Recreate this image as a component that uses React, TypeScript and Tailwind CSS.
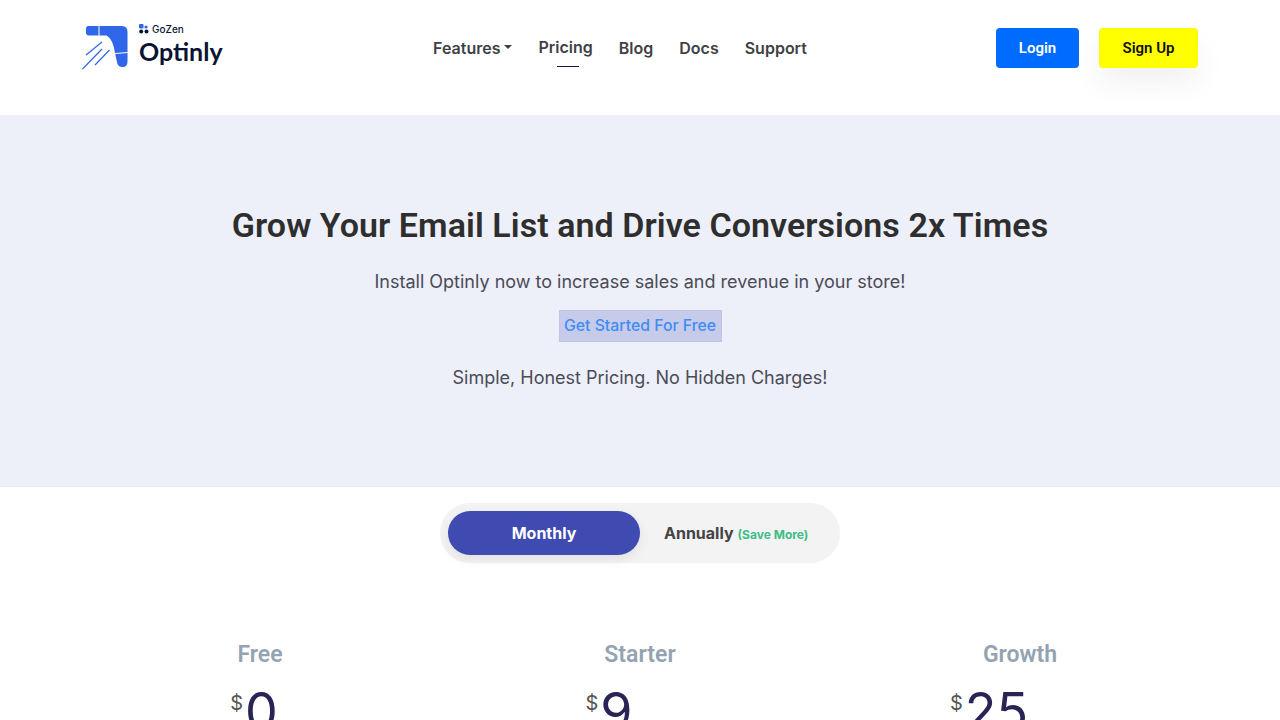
import React from "react";

const inter = "font-['Inter','Liberation_Sans',sans-serif]";
const roboto = "font-['Roboto','Liberation_Sans',sans-serif]";

function Mark() {
  return (
    <svg width="46" height="46" viewBox="0 0 46 46" className="shrink-0" aria-hidden="true">
      <path
        d="M6.5 2 H40 Q45.5 2 45.5 8 V37.5 Q45.5 43 40.5 43 Q35.5 43 35 38 L33 29 Q31 15 24.5 11.5 H7 Q4 11.5 4 8.5 V4.5 Q4 2 6.5 2 Z"
        fill="#2f66ea"
      />
      <path d="M17 1.5 V12" stroke="#fff" strokeWidth="1" />
      <path d="M33 29.5 L46 28.5" stroke="#fff" strokeWidth="1" />
      <path d="M4 31 L20 18" stroke="#2f66ea" strokeWidth="1.2" />
      <path d="M0.5 45 L20 25" stroke="#2f66ea" strokeWidth="1.2" />
      <path d="M13 41 L27.5 26" stroke="#2f66ea" strokeWidth="1.2" />
    </svg>
  );
}

function Logo() {
  return (
    <div className="flex items-start w-[140px] h-[46px]">
      <Mark />
      <div className="flex flex-col ml-[11px] -mt-[1px]">
        <div className="flex items-center gap-[3px] h-[11px]">
          <svg width="10" height="10" viewBox="0 0 10 10" aria-hidden="true">
            <rect x="0" y="0" width="4.5" height="4.5" rx="1" fill="#2f66ea" />
            <circle cx="2.2" cy="7.5" r="2" fill="#0b1533" />
            <circle cx="7.5" cy="7.5" r="2" fill="#0b1533" />
            <circle cx="7" cy="3" r="1.6" fill="#2f66ea" />
          </svg>
          <span className={`${inter} text-[10px] leading-none font-medium text-[#0b1533]`}>GoZen</span>
        </div>
        <span className="font-['Lato','Inter',sans-serif] text-[25px] leading-[34px] font-bold text-[#0b1533]">
          Optinly
        </span>
      </div>
    </div>
  );
}

function NavItem({ children }: { children: React.ReactNode }) {
  return <a className="text-[16px] leading-6 font-semibold text-[#3f3f46]">{children}</a>;
}

function Plan({ name, price, shift }: { name: string; price: string; shift: string }) {
  return (
    <div className="flex flex-col items-center">
      <h3 className={`${roboto} text-[23px] leading-[28px] font-semibold text-[#94a3b1]`}>{name}</h3>
      <div className={`flex items-start mt-[13px] ${shift}`}>
        <span className={`${inter} text-[20px] leading-6 text-[#555] mt-[9px] mr-[2px]`}>$</span>
        <span className={`${inter} text-[52px] leading-[60px] text-[#2a2356]`}>{price}</span>
      </div>
    </div>
  );
}

export default function App() {
  return (
    <div className={`${inter} h-[720px] overflow-hidden bg-white`}>
      <header className="h-[115px] flex items-start justify-between pl-[82px] pr-[82px] pt-[24px]">
        <Logo />
        <nav className="flex items-center gap-[26px] mt-[12px] ml-[22px]">
          <a className="flex items-center gap-[4px] text-[16px] leading-6 font-semibold text-[#3f3f46]">
            Features
            <span className="w-0 h-0 border-x-[4px] border-x-transparent border-t-[4px] border-t-[#3f3f46] mb-[2px]" />
          </a>
          <a className="relative -mt-[1px] -translate-y-[1px] text-[16px] leading-6 font-semibold text-[#3f3f46]">
            Pricing
            <span className="absolute left-[19px] top-[31px] w-[22px] h-[1px] bg-[#14143c]" />
          </a>
          <NavItem>Blog</NavItem>
          <NavItem>Docs</NavItem>
          <NavItem>Support</NavItem>
        </nav>
        <div className={`${roboto} flex items-center gap-[20px] mt-[4px]`}>
          <button className="w-[83px] h-[40px] rounded-[4px] bg-[#006cff] text-white text-[15px] font-semibold">
            Login
          </button>
          <button className="w-[99px] h-[40px] rounded-[4px] bg-[#ffff00] text-[#111] text-[15px] font-semibold shadow-[0_15px_30px_rgba(0,0,0,0.06)]">
            Sign Up
          </button>
        </div>
      </header>

      <section className="h-[372px] bg-[#edf0f9] border-b border-[#e8ebf3] flex flex-col items-center pt-[88px]">
        <h1 className={`${roboto} text-[34px] leading-[44px] font-semibold tracking-[0.06px] text-[#2e2e2e]`}>
          Grow Your Email List and Drive Conversions 2x Times
        </h1>
        <p className="mt-[21px] text-[18px] leading-[28px] text-[#4b4b57]">
          Install Optinly now to increase sales and revenue in your store!
        </p>
        <a className="mt-[14px] w-[163px] h-[32px] flex items-center justify-center bg-[#c6cbea] border border-[#bfc5e4] text-[15.8px] font-medium text-[#3f8cf5]">
          Get Started For Free
        </a>
        <p className="mt-[22px] text-[18px] leading-[28px] text-[#4b4b57]">
          Simple, Honest Pricing. No Hidden Charges!
        </p>
      </section>

      <div className="flex justify-center mt-[16px]">
        <div className="w-[400px] h-[60px] rounded-full bg-[#f3f3f3] flex items-center pl-[8px]">
          <div className="w-[192px] h-[44px] rounded-full bg-[#3f4bb0] text-white text-[16px] font-bold flex items-center justify-center shadow-[0_4px_12px_rgba(0,0,0,0.08)]">
            Monthly
          </div>
          <div className="ml-[24px] flex items-baseline gap-[4px]">
            <span className="text-[16px] font-bold text-[#444]">Annually</span>
            <span className="text-[12px] font-bold text-[#3ebd85]">(Save More)</span>
          </div>
        </div>
      </div>

      <div className="grid grid-cols-3 w-[1140px] mx-auto mt-[78px]">
        <Plan name="Free" price="0" shift="mr-[12px]" />
        <Plan name="Starter" price="9" shift="mr-[62px]" />
        <Plan name="Growth" price="25" shift="mr-[62px]" />
      </div>
    </div>
  );
}
